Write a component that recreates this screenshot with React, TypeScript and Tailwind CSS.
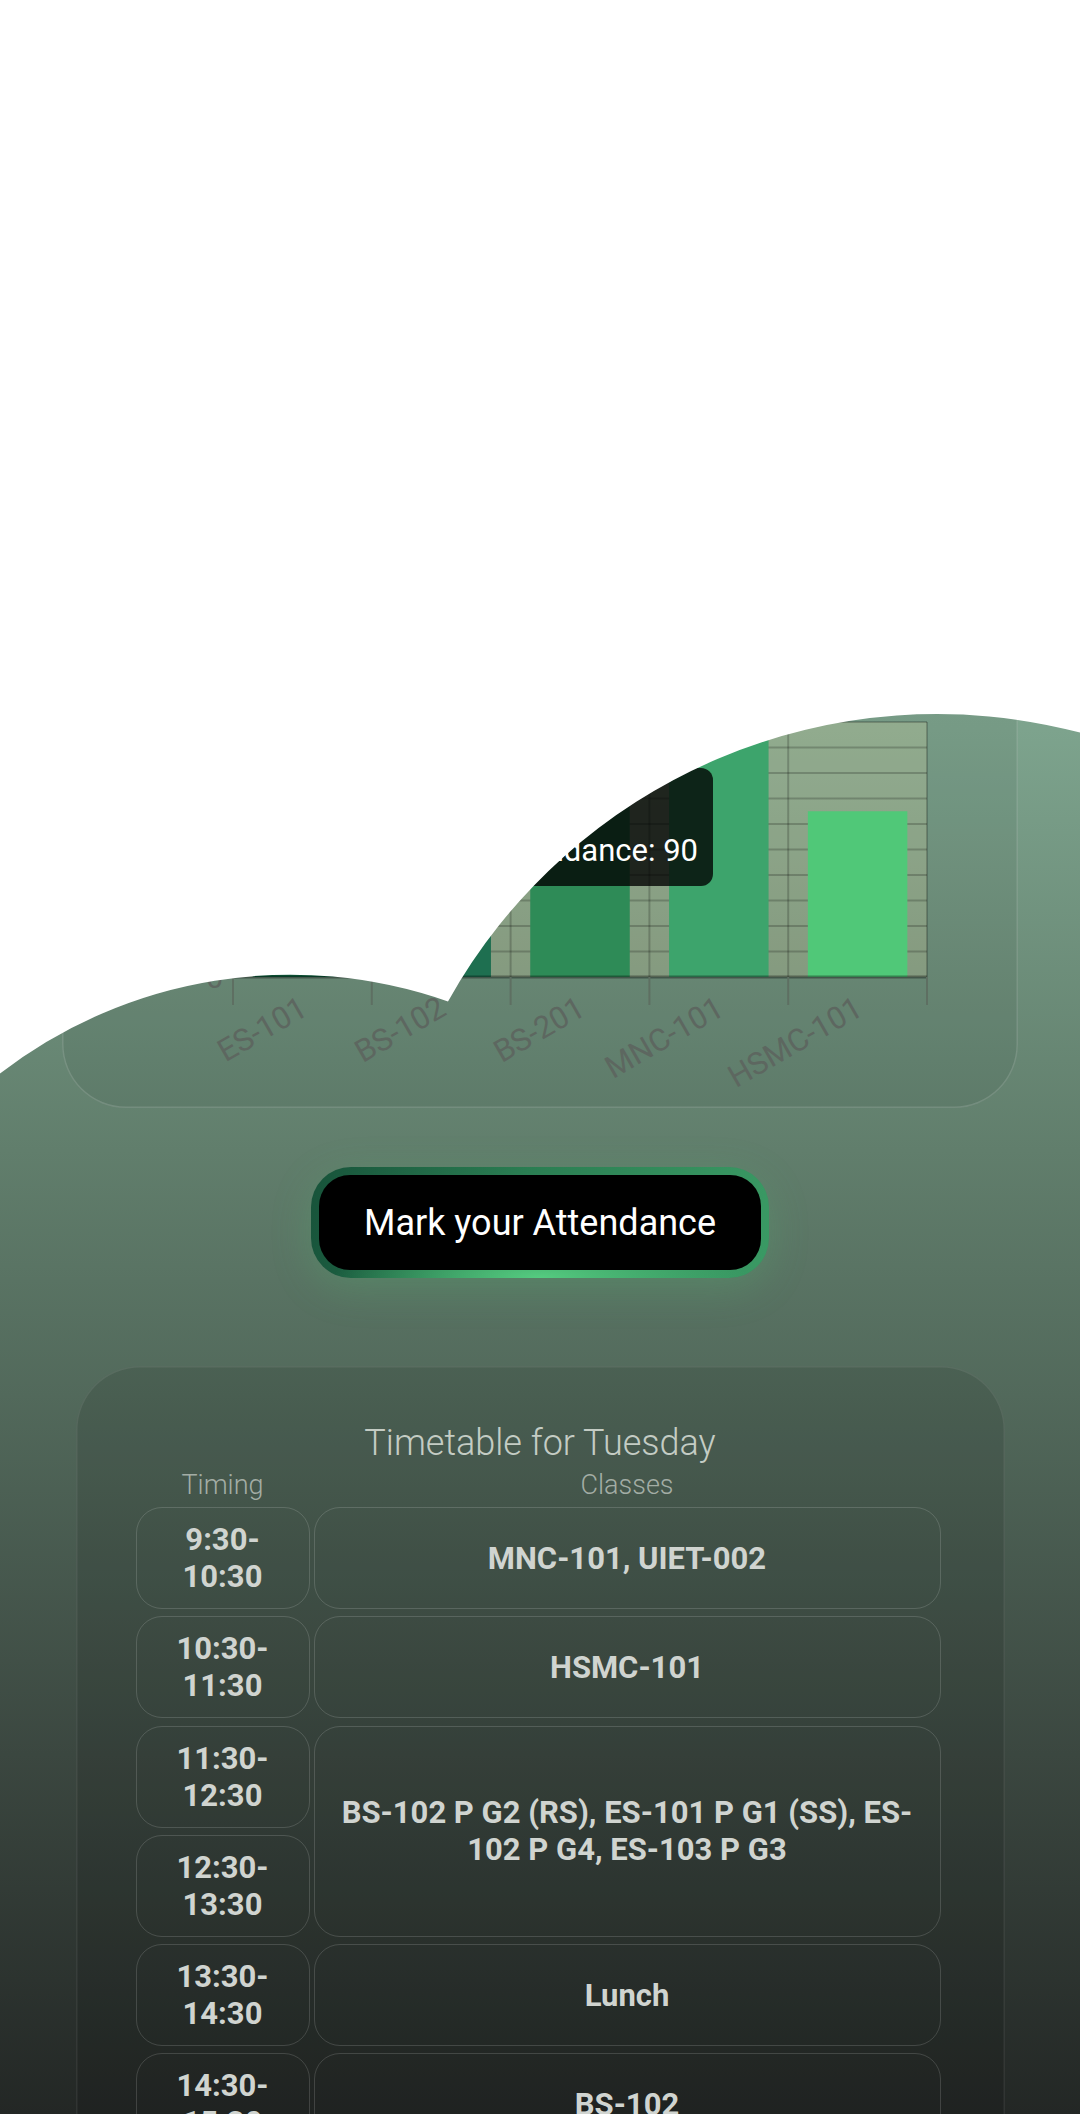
import React from "react";

const subjects = [
  { name: "ES-101", value: 78, color: "#0f5c3c" },
  { name: "BS-102", value: 85, color: "#1e6f50" },
  { name: "BS-201", value: 90, color: "#2e8b57" },
  { name: "MNC-101", value: 100, color: "#3da46c" },
  { name: "HSMC-101", value: 65, color: "#50c878" },
];

const slots = [
  { time: "9:30-10:30", classes: "MNC-101, UIET-002" },
  { time: "10:30-11:30", classes: "HSMC-101" },
  { time: "11:30-12:30", classes: "BS-102 P G2 (RS), ES-101 P G1 (SS), ES-102 P G4, ES-103 P G3", span: 2 },
  { time: "12:30-13:30", classes: null },
  { time: "13:30-14:30", classes: "Lunch" },
  { time: "14:30-15:30", classes: "BS-102" },
  { time: "15:30-16:30", classes: "ES-101" },
];

const AttendanceChart = () => {
  const left = 171;
  const right = 865;
  const top = 122;
  const bottom = 377;
  const cw = (right - left) / subjects.length;
  const bw = 99.5;
  const y = (v: number) => bottom - (v / 100) * (bottom - top);
  const ticks = Array.from({ length: 11 }, (_, i) => i * 10);

  return (
    <svg width={956} height={508} className="block">
      <rect x={left} y={top} width={right - left} height={bottom - top} fill="rgba(255,240,180,0.2)" />
      {ticks.slice(1).map((t) => (
        <line key={t} x1={left} x2={right} y1={y(t)} y2={y(t)} stroke="rgba(0,0,0,0.2)" strokeWidth={2} />
      ))}
      {subjects.map((_, i) => (
        <line key={i} x1={left + i * cw} x2={left + i * cw} y1={top} y2={bottom} stroke="rgba(0,0,0,0.2)" strokeWidth={2} />
      ))}
      <line x1={right} x2={right} y1={top} y2={bottom} stroke="rgba(0,0,0,0.2)" strokeWidth={2} />
      {subjects.map((s, i) => (
        <rect key={s.name} x={left + i * cw + (cw - bw) / 2} y={y(s.value)} width={bw} height={bottom - y(s.value)} fill={s.color} />
      ))}
      <line x1={left} x2={right} y1={bottom} y2={bottom} stroke="rgba(0,0,0,0.35)" strokeWidth={3} />
      {Array.from({ length: subjects.length + 1 }, (_, i) => (
        <line key={i} x1={left + i * cw} x2={left + i * cw} y1={bottom} y2={bottom + 28} stroke="#5e6f62" strokeWidth={2} />
      ))}
      <line x1={left - 8} x2={left} y1={bottom} y2={bottom} stroke="#5e6f62" strokeWidth={2} />
      <text x={left - 10} y={bottom} dy="0.355em" textAnchor="end" fontSize={30} fill="#5d6760">
        0
      </text>
      {subjects.map((s, i) => {
        const cx = left + i * cw + cw / 2 - 4;
        const ty = bottom + 18;
        return (
          <text
            key={s.name}
            x={cx}
            y={ty}
            dy="0.71em"
            textAnchor="end"
            fontSize={31}
            fill="#5d6760"
            transform={`rotate(-30 ${cx} ${ty})`}
          >
            {s.name}
          </text>
        );
      })}
    </svg>
  );
};

const ChartCard = () => {
  return (
    <section className="relative w-[956px] h-[508px] rounded-[64px] bg-black/[0.05] shadow-[inset_0_0_0_1.5px_rgba(255,255,255,0.14)]">
      <AttendanceChart />
      <div className="absolute left-[406px] top-[168px] w-[245px] h-[118px] rounded-xl bg-black/[0.78] px-[15px] pt-[20px] text-[31px] leading-[42px] text-white">
        <p>BS-201</p>
        <p className="text-right">Attendance: 90</p>
      </div>
    </section>
  );
};

const AttendanceButton = () => {
  return (
    <button
      type="button"
      className="mt-[59px] w-[458px] h-[111px] rounded-[40px] p-[8px] bg-[radial-gradient(45%_45%_at_50%_100%,#55cc80_0%,rgba(85,204,128,0)_100%),linear-gradient(100deg,#17533a_0%,#2a7d52_45%,#3a9a64_100%)] shadow-[0_10px_40px_rgba(80,200,120,0.22)]"
    >
      <span className="flex h-full w-full items-center justify-center rounded-[31px] bg-black text-[36px] text-white">
        Mark your Attendance
      </span>
    </button>
  );
};

const Timetable = () => {
  return (
    <section className="mt-[88px] w-[929px] rounded-[64px] bg-black/10 shadow-[inset_0_0_0_1.5px_rgba(255,255,255,0.08)] pt-[56px] pb-[60px]">
      <h2 className="text-center text-[36px] leading-[42px] font-light text-[#c4ccc4]">Timetable for Tuesday</h2>
      <div className="ml-[60px] w-[805px]">
        <div className="mt-[5px] grid grid-cols-[174px_627px] gap-x-[4px] text-center text-[27px] leading-[32px] font-light text-[#a3ada5]">
          <span>Timing</span>
          <span>Classes</span>
        </div>
        <div className="mt-[6px] grid grid-cols-[174px_627px] auto-rows-[102px] gap-x-[4px] gap-y-[7.3px] text-center text-[31px] leading-[37px] font-bold text-[#d0d4d0]">
          {slots.map((s) => (
            <React.Fragment key={s.time}>
              <div className="flex items-center justify-center rounded-[26px] border border-white/15 px-5">{s.time}</div>
              {s.classes !== null && (
                <div
                  className={
                    s.span === 2
                      ? "row-span-2 flex items-center justify-center rounded-[26px] border border-white/15 px-4"
                      : "flex items-center justify-center rounded-[26px] border border-white/15 px-4"
                  }
                >
                  {s.classes}
                </div>
              )}
            </React.Fragment>
          ))}
        </div>
      </div>
    </section>
  );
};

export default function App() {
  return (
    <div className="relative w-[1080px] h-[2114px] overflow-hidden bg-[linear-gradient(180deg,#9cc1a9_0%,#7da38d_34.5%,#617e6c_54.4%,#52695b_66%,#3b4740_83%,#232725_100%)] font-['Roboto',sans-serif]">
      <main className="flex flex-col items-center pt-[600px]">
        <ChartCard />
        <AttendanceButton />
        <Timetable />
      </main>
      <svg width={1080} height={1110} className="pointer-events-none absolute left-0 top-0">
        <path d="M0 0 H1080 V732.6 A560 560 0 0 0 448 1001.5 A476 476 0 0 0 0 1073.5 Z" fill="#ffffff" />
      </svg>
    </div>
  );
}
